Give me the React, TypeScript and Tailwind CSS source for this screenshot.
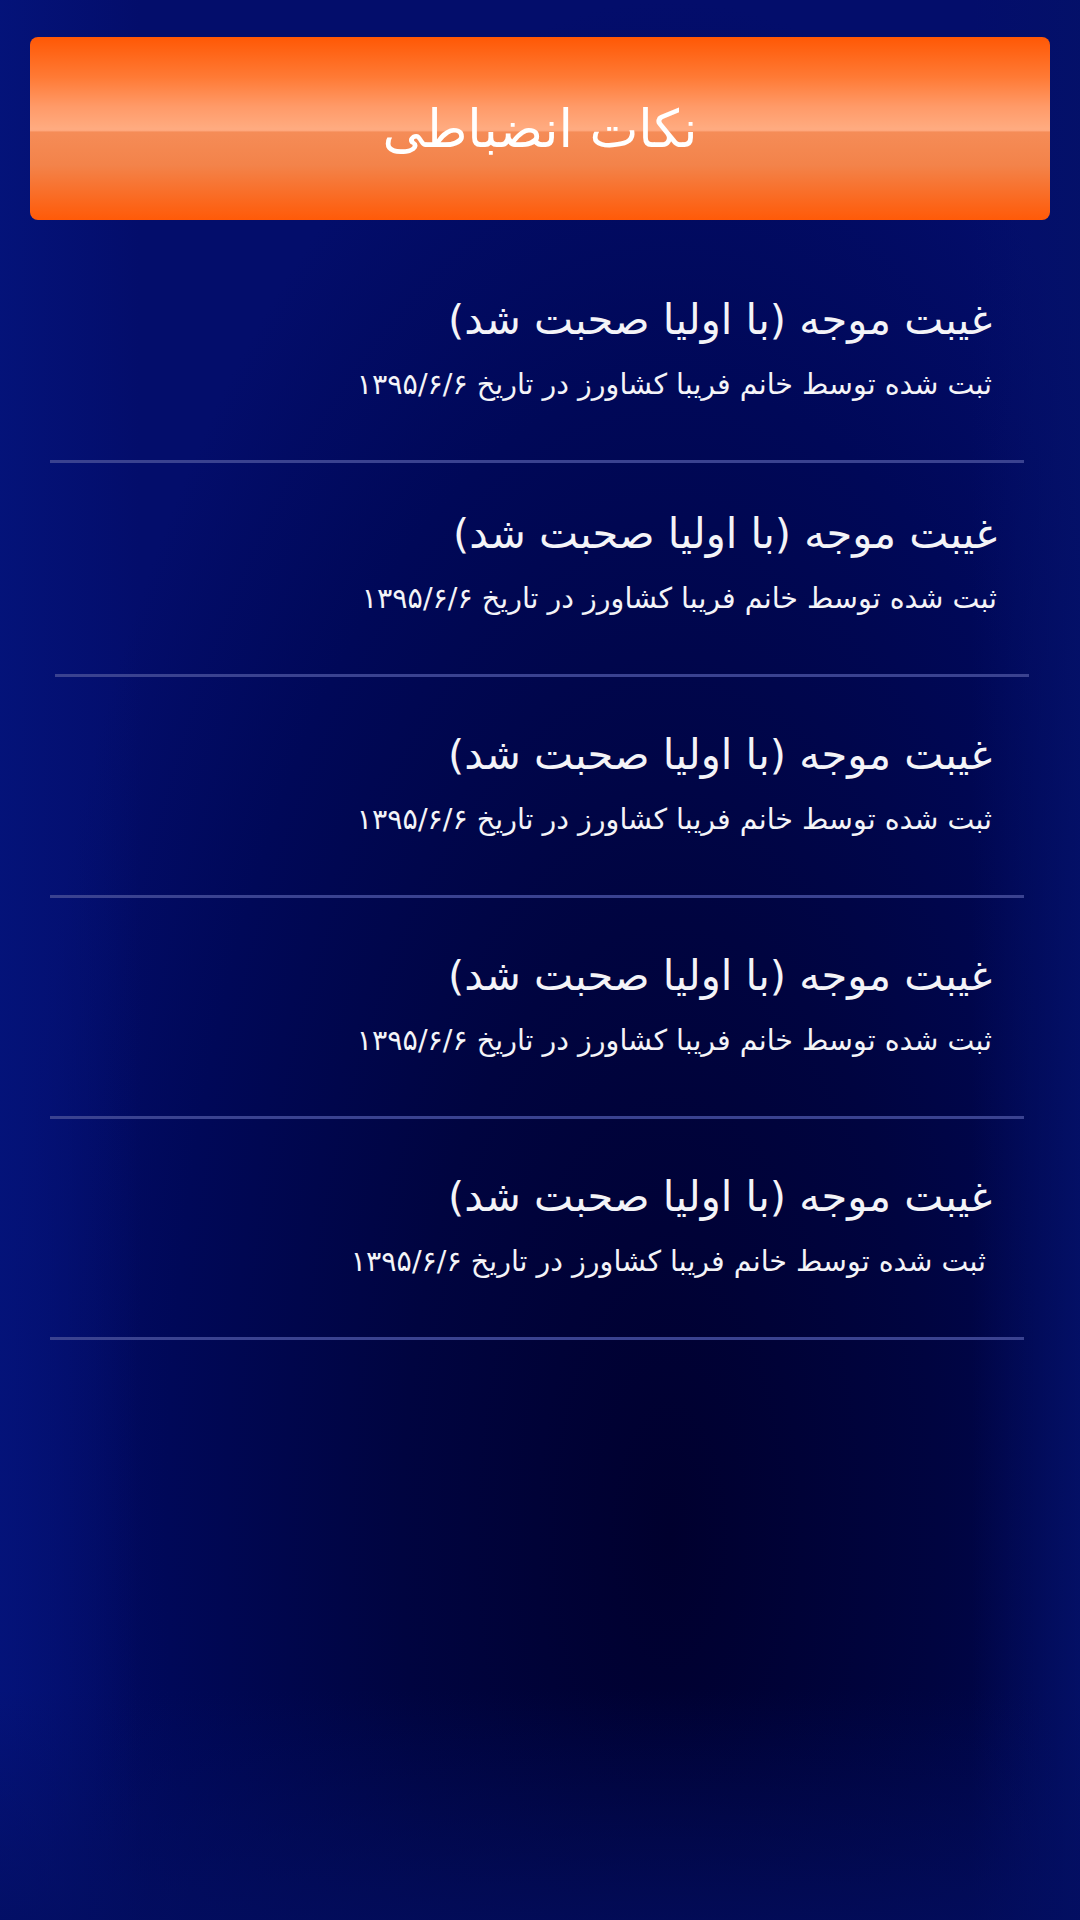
import React from "react";

type Note = {
  title: string;
  meta: string;
  extra?: string;
  metaShift?: string;
};

const notes: Note[] = [
  { title: "غیبت موجه (با اولیا صحبت شد)", meta: "ثبت شده توسط خانم فریبا کشاورز در تاریخ ۱۳۹۵/۶/۶", extra: "pt-[57px]" },
  { title: "غیبت موجه (با اولیا صحبت شد)", meta: "ثبت شده توسط خانم فریبا کشاورز در تاریخ ۱۳۹۵/۶/۶", extra: "translate-x-[5px] pt-[47px]" },
  { title: "غیبت موجه (با اولیا صحبت شد)", meta: "ثبت شده توسط خانم فریبا کشاورز در تاریخ ۱۳۹۵/۶/۶" },
  { title: "غیبت موجه (با اولیا صحبت شد)", meta: "ثبت شده توسط خانم فریبا کشاورز در تاریخ ۱۳۹۵/۶/۶" },
  { title: "غیبت موجه (با اولیا صحبت شد)", meta: "ثبت شده توسط خانم فریبا کشاورز در تاریخ ۱۳۹۵/۶/۶", metaShift: "-translate-x-[6px]" },
];

export default function App() {
  return (
    <div
      dir="rtl"
      className="min-h-screen w-full bg-[#030d6b] bg-[linear-gradient(to_top,rgba(3,14,96,0.75)_0%,rgba(3,14,96,0)_12%),linear-gradient(to_right,rgba(4,19,122,0.95)_0%,rgba(4,19,122,0)_13%,rgba(4,19,122,0)_90%,rgba(4,17,105,0.85)_100%),radial-gradient(ellipse_62%_80%_at_62%_80%,#00002e_0%,#000440_40%,#000858_75%,#030d6b_100%)] px-[30px] pt-[37px] font-['DejaVu_Sans',sans-serif] text-[#f4f4f8]"
    >
      <Header />
      <div className="mt-[19px] pr-[26px] pl-[20px]">
        {notes.map((note, i) => (
          <NoteRow key={i} note={note} />
        ))}
      </div>
    </div>
  );
}

function Header() {
  return (
    <div className="flex h-[183px] items-center justify-center rounded-[8px] bg-[linear-gradient(to_bottom,#ff5805_0%,#ff7a35_22%,#ff9a68_38%,#ffab80_50%,#ffaa80_51%,#f58c57_52%,#f3834a_70%,#ff5a08_100%)]">
      <h1 className="text-[52px] leading-none text-white">نکات انضباطی</h1>
    </div>
  );
}

function NoteRow({ note }: { note: Note }) {
  return (
    <div className={`border-b-[3px] border-[#3a4290] pr-[32px] pb-[57px] ${note.extra ?? "pt-[54px]"}`}>
      <h2 className="text-[41.6px] leading-[48px]">{note.title}</h2>
      <p className={`mt-[23px] text-[28.5px] leading-[36px] ${note.metaShift ?? ""}`}>{note.meta}</p>
    </div>
  );
}
